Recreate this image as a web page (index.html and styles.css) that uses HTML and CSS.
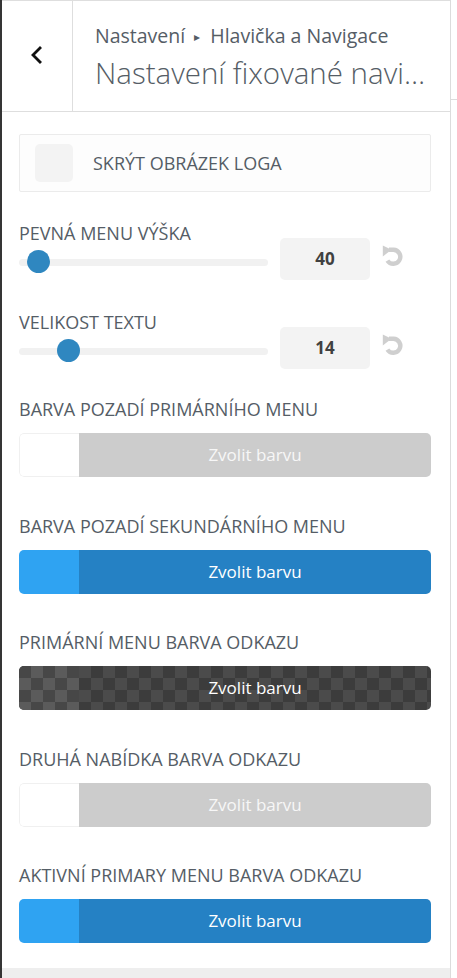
FILE: index.html
```html
<!DOCTYPE html>
<html lang="cs">
<head>
<meta charset="utf-8">
<title>Nastavení fixované navigace</title>
<link rel="stylesheet" href="styles.css">
</head>
<body>
<div class="wrap">
  <div class="panel">
    <header class="head">
      <button class="back" aria-label="Zpět">
        <svg width="14" height="20" viewBox="0 0 14 20"><polyline points="10,3 3,10 10,17" fill="none" stroke="#111" stroke-width="2.8" stroke-linecap="square"/></svg>
      </button>
      <div class="titles">
        <div class="crumb">Nastavení <span class="tri">▸</span> Hlavička a Navigace</div>
        <div class="title">Nastavení fixované navigace</div>
      </div>
    </header>

    <div class="content">
      <label class="check">
        <span class="box"></span>
        <span class="check-text">SKRÝT OBRÁZEK LOGA</span>
      </label>

      <div class="label first">PEVNÁ MENU VÝŠKA</div>
      <div class="range-row">
        <div class="slider"><div class="track"></div><span class="thumb" style="left:7.5px"></span></div>
        <div class="num">40</div>
        <span class="reset"><svg width="22" height="23" viewBox="0 0 22 23"><path d="M7 4.8 H11.5 A7 7 0 1 1 5.4 15.6" fill="none" stroke="#cfcfcf" stroke-width="4.4"/><polygon points="0.8,0.6 9.5,4.8 0.8,11.5" fill="#cfcfcf"/></svg></span>
      </div>

      <div class="label">VELIKOST TEXTU</div>
      <div class="range-row">
        <div class="slider"><div class="track"></div><span class="thumb" style="left:37.5px"></span></div>
        <div class="num">14</div>
        <span class="reset"><svg width="22" height="23" viewBox="0 0 22 23"><path d="M7 4.8 H11.5 A7 7 0 1 1 5.4 15.6" fill="none" stroke="#cfcfcf" stroke-width="4.4"/><polygon points="0.8,0.6 9.5,4.8 0.8,11.5" fill="#cfcfcf"/></svg></span>
      </div>

      <div class="label color-label first-color">BARVA POZADÍ PRIMÁRNÍHO MENU</div>
      <div class="picker empty"><span class="swatch"></span><span class="pick">Zvolit barvu</span></div>

      <div class="label color-label">BARVA POZADÍ SEKUNDÁRNÍHO MENU</div>
      <div class="picker blue"><span class="swatch"></span><span class="pick">Zvolit barvu</span></div>

      <div class="label color-label">PRIMÁRNÍ MENU BARVA ODKAZU</div>
      <div class="picker dark"><span class="swatch"></span><span class="pick">Zvolit barvu</span></div>

      <div class="label color-label">DRUHÁ NABÍDKA BARVA ODKAZU</div>
      <div class="picker empty"><span class="swatch"></span><span class="pick">Zvolit barvu</span></div>

      <div class="label color-label">AKTIVNÍ PRIMARY MENU BARVA ODKAZU</div>
      <div class="picker blue"><span class="swatch"></span><span class="pick">Zvolit barvu</span></div>
    </div>
    <div class="foot"></div>
  </div>
  <div class="side"><div class="side-line"></div></div>
</div>
</body>
</html>
```

FILE: styles.css
```css
* { box-sizing: border-box; }
html, body { margin: 0; padding: 0; background: #fff; }
body {
  font-family: "Open Sans", "Noto Sans", sans-serif;
  color: #555d66;
}
.wrap { display: flex; height: 978px; overflow: hidden; }
.panel {
  width: 451px;
  border-left: 2px solid #353535;
  border-right: 1px solid #dcdcdc;
  display: flex;
  flex-direction: column;
}
.side { flex: 1; }
.side-line { margin-top: 99px; border-top: 1px solid #dcdcdc; }

.head {
  display: flex;
  height: 112px;
  border-top: 1px solid #dedede;
  border-bottom: 1px solid #dedede;
}
.back {
  width: 71px;
  border: 0;
  border-right: 1px solid #dedede;
  background: #fff;
  padding: 0 0 2px 0;
  display: flex;
  align-items: center;
  justify-content: center;
}
.titles {
  flex: 1;
  min-width: 0;
  padding: 21px 20px 0 22px;
}
.crumb {
  font-size: 19.5px;
  line-height: 28px;
  color: #555d66;
  white-space: nowrap;
}
.tri { font-size: 12px; position: relative; top: -2px; margin: 0 5px 0 4px; }
.title {
  font-size: 29.5px;
  font-weight: 300;
  line-height: 40px;
  margin-top: 0;
  color: #555d66;
  white-space: nowrap;
  overflow: hidden;
  text-overflow: ellipsis;
}

.content { padding: 22px 19px 0 17px; flex: 1; }

.check {
  display: flex;
  align-items: center;
  height: 58px;
  border: 1px solid #ebebeb;
  background: #fdfdfd;
  border-radius: 2px;
  padding-left: 15px;
}
.box {
  width: 38px;
  height: 38px;
  background: #f3f3f3;
  border-radius: 5px;
}
.check-text { margin-left: 20px; font-size: 18px; line-height: 20px; color: #555d66; }

.label {
  font-size: 18px;
  line-height: 20px;
  height: 20px;
  color: #555d66;
  margin-top: 32px;
  white-space: nowrap;
}
.label.first { margin-top: 31px; }

.range-row {
  display: flex;
  align-items: flex-start;
  margin-top: -5px;
  height: 42px;
}
.slider { flex: 1; position: relative; height: 42px; }
.track {
  position: absolute;
  left: 0; right: 0;
  top: 21px;
  height: 7px;
  border-radius: 4px;
  background: #f1f1f1;
}
.thumb {
  position: absolute;
  top: 12px;
  width: 23px;
  height: 23px;
  border-radius: 50%;
  background: #2f87c0;
}
.num {
  width: 90px;
  height: 42px;
  margin-left: 12px;
  background: #f3f3f3;
  border-radius: 5px;
  font-weight: 700;
  font-size: 17px;
  line-height: 42px;
  text-align: center;
  color: #404040;
}
.reset { margin-left: 12px; margin-right: 27px; margin-top: 7px; width: 22px; height: 23px; display: block; }
.reset svg { display: block; }

.color-label { margin-top: 38.5px; }
.color-label.first-color { margin-top: 30px; }

.picker {
  display: flex;
  height: 44px;
  margin-top: 14px;
  border-radius: 5px;
  overflow: hidden;
}
.swatch { width: 60px; flex: none; }
.pick {
  flex: 1;
  text-align: center;
  font-size: 17px;
  line-height: 44px;
  color: #fff;
}
.picker.empty .swatch {
  background: #fff;
  border: 1px solid #f0f0f0;
  border-right: 0;
  border-radius: 5px 0 0 5px;
}
.picker.empty .pick { background: #cccccc; color: #f7f7f7; }
.picker.blue .swatch { background: #2fa3f2; }
.picker.blue .pick { background: #2581c4; }
.picker.dark {
  background-image: repeating-conic-gradient(#4b4b4b 0 25%, #3c3c3c 0 50%);
  background-size: 24px 24px;
}
.picker.dark .swatch {
  background-image: repeating-conic-gradient(#5b5b5b 0 25%, #474747 0 50%);
  background-size: 24px 24px;
}
.picker.dark .pick { background: transparent; }

.foot { height: 10px; background: #eeeeee; flex: none; }
```
